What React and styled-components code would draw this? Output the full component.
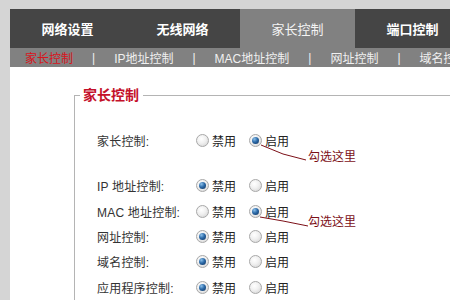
import React from 'react'
import styled, { createGlobalStyle } from 'styled-components'

const GlobalStyle = createGlobalStyle`
    html, body {
        margin: 0;
        padding: 0;
        background: #d5d5d5;
        overflow: hidden;
    }
    body {
        font-family: "Liberation Sans", "Noto Sans CJK SC", sans-serif;
    }
`

const Pagina = styled.div`
    width: 450px;
    height: 300px;
    box-sizing: border-box;
    padding: 9px 0 0 10px;
    display: flex;
    flex-direction: column;
`

const Principal = styled.div`
    flex: 1;
    background: #ffffff;
    display: flex;
    flex-direction: column;
    overflow: hidden;
`

const BarraAbas = styled.div`
    display: flex;
    height: 39px;
    background: #454545;
    flex: none;
`

const Aba = styled.div`
    width: 115px;
    flex: none;
    display: flex;
    align-items: center;
    justify-content: center;
    font-size: 13px;
    font-weight: ${p => (p.$ativa ? 'normal' : 'bold')};
    color: ${p => (p.$ativa ? '#f4f4f4' : '#ffffff')};
    background: ${p => (p.$ativa ? '#818181' : 'transparent')};
`

const SubBarra = styled.div`
    height: 19px;
    flex: none;
    background: #818181;
    display: flex;
    align-items: center;
    padding-left: 15px;
    font-size: 12px;
    color: #f0f0f0;
    white-space: nowrap;
`

const SubItem = styled.span`
    color: ${p => (p.$ativo ? '#d8141c' : '#f0f0f0')};
`

const Separador = styled.span`
    margin: 0 19px;
`

const Conteudo = styled.div`
    padding: 19px 0 0 64px;
`

const Quadro = styled.fieldset`
    margin: 0;
    width: 460px;
    border: 1px solid #b4b4b4;
    border-bottom: none;
    padding: 0 0 20px 5px;
    height: 260px;
`

const Legenda = styled.legend`
    padding: 0 4px 0 3px;
    font-size: 14px;
    line-height: 18px;
    font-weight: bold;
    color: #c4102a;
`

const Linhas = styled.div`
    margin: 23px 0 0 17px;
    display: flex;
    flex-direction: column;
`

const Linha = styled.div`
    position: relative;
    display: grid;
    grid-template-columns: 99px auto auto 1fr;
    align-items: center;
    height: ${p => (p.$primeira ? '26px' : '25.4px')};
    margin-bottom: ${p => (p.$primeira ? '20px' : '0')};
    font-size: 12px;
    color: #333333;
`

const Rotulo = styled.span`
    letter-spacing: 0.2px;
`

const OpcaoRadio = styled.label`
    display: inline-flex;
    align-items: center;
    gap: 3px;
    margin-right: 13px;
    font-size: 12px;
    color: #222222;
`

const Circulo = styled.span`
    width: 11px;
    height: 11px;
    border-radius: 50%;
    border: 1px solid #a8a8a8;
    background: radial-gradient(circle at 40% 35%, #ffffff 0%, #f0f0f0 45%, #cfcfcf 100%);
    display: flex;
    align-items: center;
    justify-content: center;

    &::after {
        content: '';
        display: ${p => (p.$marcado ? 'block' : 'none')};
        width: 7px;
        height: 7px;
        border-radius: 50%;
        background: radial-gradient(circle at 35% 30%, #8cc0ea 0%, #2c6aa8 45%, #0e2f5a 100%);
    }
`

const Nota = styled.div`
    position: absolute;
    left: 0;
    top: 0;
    pointer-events: none;
`

const TextoNota = styled.span`
    position: absolute;
    left: ${p => p.$x}px;
    top: ${p => p.$y}px;
    font-size: 12px;
    line-height: 16px;
    color: #7c1018;
    white-space: nowrap;
`

const Desenho = styled.svg`
    position: absolute;
    left: 0;
    top: 0;
    overflow: visible;
`

function Radio({ texto, marcado }) {
    return (
        <OpcaoRadio>
            <Circulo $marcado={marcado} />
            {texto}
        </OpcaoRadio>
    )
}

function Anotacao({ pontos, tx, ty }) {
    return (
        <Nota>
            <Desenho width="220" height="40">
                <polyline points={pontos} fill="none" stroke="#7c1018" strokeWidth="1" />
            </Desenho>
            <TextoNota $x={tx} $y={ty}>勾选这里</TextoNota>
        </Nota>
    )
}

const abas = ['网络设置', '无线网络', '家长控制', '端口控制']
const subItens = ['家长控制', 'IP地址控制', 'MAC地址控制', '网址控制', '域名控制']

const linhas = [
    { rotulo: 'IP 地址控制:', ativo: false },
    { rotulo: 'MAC 地址控制:', ativo: true, nota: true },
    { rotulo: '网址控制:', ativo: false },
    { rotulo: '域名控制:', ativo: false },
    { rotulo: '应用程序控制:', ativo: false },
]

export default function App() {
    return (
        <Pagina>
            <GlobalStyle />
            <Principal>
                <BarraAbas>
                    {abas.map((a, i) => (
                        <Aba key={a + i} $ativa={i === 2}>{a}</Aba>
                    ))}
                </BarraAbas>
                <SubBarra>
                    {subItens.map((s, i) => (
                        <React.Fragment key={s}>
                            {i > 0 && <Separador>|</Separador>}
                            <SubItem $ativo={i === 0}>{s}</SubItem>
                        </React.Fragment>
                    ))}
                </SubBarra>
                <Conteudo>
                    <Quadro>
                        <Legenda>家长控制</Legenda>
                        <Linhas>
                            <Linha $primeira>
                                <Rotulo>家长控制:</Rotulo>
                                <Radio texto="禁用" marcado={false} />
                                <Radio texto="启用" marcado={true} />
                                <Anotacao pontos="164,18 186,27 209,33" tx={211} ty={22} />
                            </Linha>
                            {linhas.map(l => (
                                <Linha key={l.rotulo}>
                                    <Rotulo>{l.rotulo}</Rotulo>
                                    <Radio texto="禁用" marcado={!l.ativo} />
                                    <Radio texto="启用" marcado={l.ativo} />
                                    {l.nota && <Anotacao pontos="163,19 186,23 211,28" tx={211} ty={16} />}
                                </Linha>
                            ))}
                        </Linhas>
                    </Quadro>
                </Conteudo>
            </Principal>
        </Pagina>
    )
}
